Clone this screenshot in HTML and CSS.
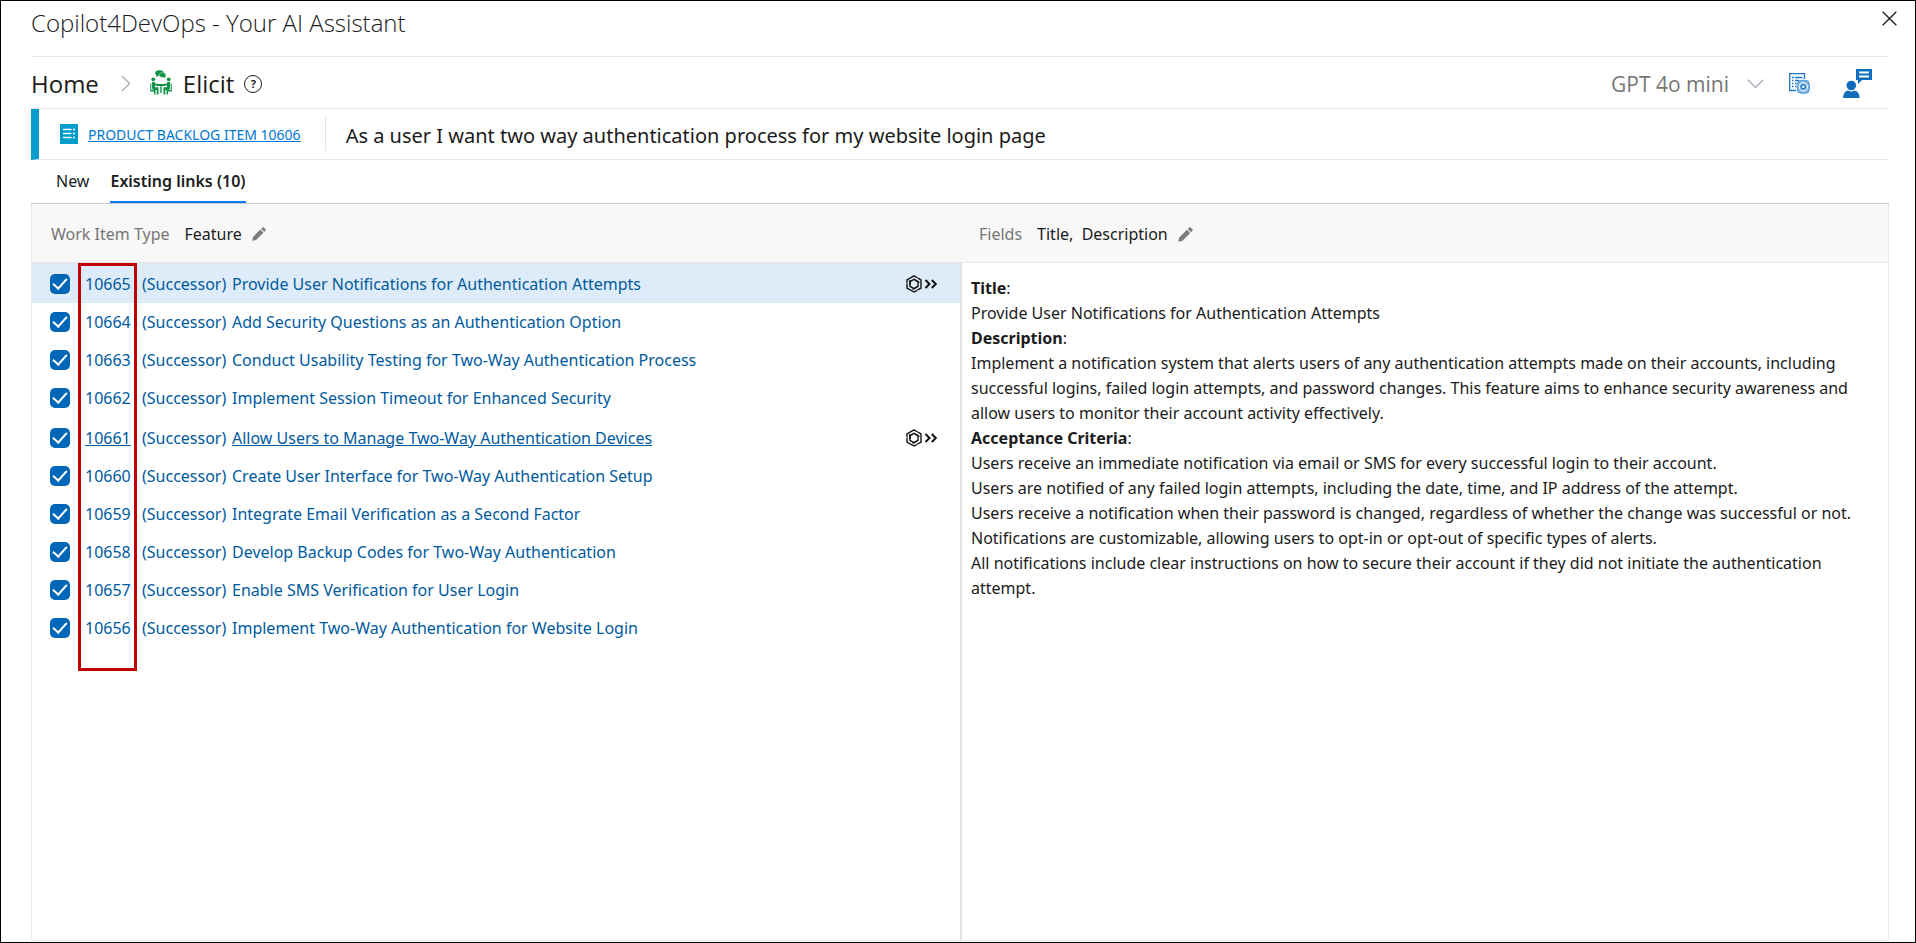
FILE: index.html
```html
<!DOCTYPE html>
<html lang="en">
<head>
<meta charset="utf-8">
<title>Copilot4DevOps - Your AI Assistant</title>
<link rel="stylesheet" href="styles.css">
</head>
<body>
<svg class="defs" aria-hidden="true">
  <symbol id="pencil" viewBox="0 0 14 14">
    <path d="M1 10 8.300 2.600 11.400 5.700 4 13 .300 13.700Z M9.100 1.800 10.700.3Q11.200 0 11.700.4L13.600 2.300Q14 2.800 13.600 3.300L12.200 4.900Z" fill="#7c7c7c"/>
  </symbol>
  <symbol id="swirl" viewBox="0 0 32 18">
    <g fill="none" stroke="#111" stroke-width="1.400">
      <path id="blade" d="M2 8.500V5L9 .900 12.500 3 M5 10V6.700L9 4.300 14.500 7.500"/>
      <use href="#blade" transform="rotate(120 9 9)"/>
      <use href="#blade" transform="rotate(240 9 9)"/>
      <path d="M20.500 5 24.500 9 20.500 13 M26.800 5 30.800 9 26.800 13" stroke-width="2"/>
    </g>
  </symbol>
</svg>
<div class="dialog">
  <header class="titlebar">
    <h1 class="titlebar-text">Copilot4DevOps - Your AI Assistant</h1>
    <button class="icon-btn close" aria-label="Close">
      <svg width="15" height="15" viewBox="0 0 15 15"><path d="M.700.700 14.300 14.300M14.300.700.700 14.300" stroke="#222" stroke-width="1.400"/></svg>
    </button>
  </header>

  <nav class="crumbs">
    <a class="crumb" href="#home">Home</a>
    <svg class="crumb-sep" width="10" height="17" viewBox="0 0 10 17"><path d="M1 1 8.500 8.500 1 16" fill="none" stroke="#a9abb5" stroke-width="1.400"/></svg>
    <svg class="crumb-icon" width="22" height="25" viewBox="0 0 22 25" fill="#0f9347">
      <ellipse cx="9.500" cy="3" rx="4.300" ry="2.800"/>
      <path d="M6.500 4.500 5.800 7 9 5.600Z"/>
      <ellipse cx="12.500" cy="5" rx="3.300" ry="2.400" stroke="#fff" stroke-width=".4"/>
      <path d="M13.500 6.500 15.500 8.500 15.300 5.500Z"/>
      <circle cx="3.300" cy="9.300" r="1.900"/><circle cx="18.700" cy="9.300" r="1.900"/>
      <path d="M2 12H4.500L5.500 13.800H8V15.500H5V17.200H8.500V24.500H6.700V20H4Q2 20 2 18Z"/>
      <path d="M20 12H17.500L16.500 13.800H14V15.500H17V17.200H13.500V24.500H15.300V20H18Q20 20 20 18Z"/>
      <path d="M7 14H15V16H7Z M10.300 15.500H11.700V23H10.300Z M.300 13.500H1.300V20H5.500V24.500H4V21.500H.300Z M21.700 13.500H20.700V20H16.500V24.500H18V21.500H21.700Z"/>
    </svg>
    <span class="crumb current">Elicit</span>
    <button class="icon-btn help" aria-label="Help">?</button>
    <div class="crumb-tools">
      <label class="model">
        <select class="model-select" aria-label="Model"><option>GPT 4o mini</option></select>
        <svg width="17" height="10" viewBox="0 0 17 10"><path d="M.800.800 8.500 8.500 16.200.800" fill="none" stroke="#a9abb5" stroke-width="1.400"/></svg>
      </label>
      <button class="icon-btn" aria-label="Document settings">
        <svg width="21" height="21" viewBox="0 0 21 21" fill="none" stroke="#1f77c8">
          <path d="M15.500 6V.700H.700V17.500H7" stroke-width="1.300"/>
          <path d="M3 4.500H5M6 4.500H13.500M3 7.500H4.500M6 7.500H10M3 10.500H4.500M6 10.500H7.500M3 13.500H4.500M6 13.500H7.500" stroke-width="1.300"/>
          <rect x="8.300" y="7.300" width="12" height="13" rx="4" fill="#7fb5e4" stroke="#4a93d6" stroke-width="1"/>
          <circle cx="14.300" cy="13.800" r="4.200" stroke="#fff" stroke-width="1"/>
          <circle cx="14.300" cy="13.800" r="2" stroke="#1f77c8" fill="#fff" stroke-width="1.300"/>
        </svg>
      </button>
      <button class="icon-btn feedback" aria-label="Feedback">
        <svg width="29" height="29" viewBox="0 0 29 29" fill="#0f6cbd">
          <path d="M13 0H29V11H19L15 15V11H13Z"/>
          <path d="M16 3.500H26M16 7.500H26" stroke="#fff" stroke-width="1.800"/>
          <circle cx="8.300" cy="16.500" r="4.800"/>
          <path d="M0 29Q.500 22 5 21.500Q8.300 23.600 11.600 21.500Q16.200 22 16.700 29Z"/>
        </svg>
      </button>
    </div>
  </nav>

  <section class="item">
    <svg class="item-icon" width="18" height="20" viewBox="0 0 18 20"><rect width="18" height="20" fill="#009ccc"/><path d="M3 5.500H11.500M3 9.500H11.500M3 13.500H11.500M13 5.500H15M13 9.500H15M13 13.500H15" stroke="#fff" stroke-width="1.500"/></svg>
    <a class="item-link" href="#10606">PRODUCT BACKLOG ITEM 10606</a>
    <h2 class="item-title">As a user I want two way authentication process for my website login page</h2>
  </section>

  <div class="tabs" role="tablist">
    <button class="tab" role="tab">New</button>
    <button class="tab active" role="tab" aria-selected="true">Existing links (10)</button>
  </div>

  <main class="panes">
    <section class="pane">
      <div class="toolbar">
        <span class="toolbar-label">Work Item Type</span>
        <span>Feature</span>
        <button class="icon-btn" aria-label="Edit work item type"><svg width="14" height="14"><use href="#pencil"/></svg></button>
      </div>
      <ul class="links">
        <li class="link-row tall selected"><input class="tick" type="checkbox" checked aria-label="Select 10665"><a class="id" href="#10665">10665</a><span>(Successor)</span><a class="name" href="#10665">Provide User Notifications for Authentication Attempts</a><button class="icon-btn" aria-label="Open with assistant"><svg width="32" height="18"><use href="#swirl"/></svg></button></li>
        <li class="link-row"><input class="tick" type="checkbox" checked aria-label="Select 10664"><a class="id" href="#10664">10664</a><span>(Successor)</span><a class="name" href="#10664">Add Security Questions as an Authentication Option</a></li>
        <li class="link-row"><input class="tick" type="checkbox" checked aria-label="Select 10663"><a class="id" href="#10663">10663</a><span>(Successor)</span><a class="name" href="#10663">Conduct Usability Testing for Two-Way Authentication Process</a></li>
        <li class="link-row"><input class="tick" type="checkbox" checked aria-label="Select 10662"><a class="id" href="#10662">10662</a><span>(Successor)</span><a class="name" href="#10662">Implement Session Timeout for Enhanced Security</a></li>
        <li class="link-row tall hovered"><input class="tick" type="checkbox" checked aria-label="Select 10661"><a class="id" href="#10661">10661</a><span>(Successor)</span><a class="name" href="#10661">Allow Users to Manage Two-Way Authentication Devices</a><button class="icon-btn" aria-label="Open with assistant"><svg width="32" height="18"><use href="#swirl"/></svg></button></li>
        <li class="link-row"><input class="tick" type="checkbox" checked aria-label="Select 10660"><a class="id" href="#10660">10660</a><span>(Successor)</span><a class="name" href="#10660">Create User Interface for Two-Way Authentication Setup</a></li>
        <li class="link-row"><input class="tick" type="checkbox" checked aria-label="Select 10659"><a class="id" href="#10659">10659</a><span>(Successor)</span><a class="name" href="#10659">Integrate Email Verification as a Second Factor</a></li>
        <li class="link-row"><input class="tick" type="checkbox" checked aria-label="Select 10658"><a class="id" href="#10658">10658</a><span>(Successor)</span><a class="name" href="#10658">Develop Backup Codes for Two-Way Authentication</a></li>
        <li class="link-row"><input class="tick" type="checkbox" checked aria-label="Select 10657"><a class="id" href="#10657">10657</a><span>(Successor)</span><a class="name" href="#10657">Enable SMS Verification for User Login</a></li>
        <li class="link-row"><input class="tick" type="checkbox" checked aria-label="Select 10656"><a class="id" href="#10656">10656</a><span>(Successor)</span><a class="name" href="#10656">Implement Two-Way Authentication for Website Login</a></li>
        <li class="id-highlight" aria-hidden="true"></li>
      </ul>
    </section>
    <section class="pane detail-pane">
      <div class="toolbar">
        <span class="toolbar-label">Fields</span>
        <span>Title,&nbsp; Description</span>
        <button class="icon-btn" aria-label="Edit fields"><svg width="15" height="15"><use href="#pencil"/></svg></button>
      </div>
      <div class="detail">
        <p><b>Title</b>:</p>
        <p>Provide User Notifications for Authentication Attempts</p>
        <p><b>Description</b>:</p>
        <p>Implement a notification system that alerts users of any authentication attempts made on their accounts, including successful logins, failed login attempts, and password changes. This feature aims to enhance security awareness and allow users to monitor their account activity effectively.</p>
        <p><b>Acceptance Criteria</b>:</p>
        <p>Users receive an immediate notification via email or SMS for every successful login to their account.</p>
        <p>Users are notified of any failed login attempts, including the date, time, and IP address of the attempt.</p>
        <p>Users receive a notification when their password is changed, regardless of whether the change was successful or not.</p>
        <p>Notifications are customizable, allowing users to opt-in or opt-out of specific types of alerts.</p>
        <p>All notifications include clear instructions on how to secure their account if they did not initiate the authentication attempt.</p>
      </div>
    </section>
  </main>
</div>
</body>
</html>
```
FILE: styles.css
```css
* { box-sizing: border-box; }
body {
  margin: 0;
  color: #1b1b1b;
  background: #fff;
  font-family: "Noto Sans", "Open Sans", sans-serif;
  font-size: 16px;
  line-height: 25px;
}
h1, h2, p, ul { margin: 0; padding: 0; font-weight: 400; }
button, select, input { font: inherit; color: inherit; margin: 0; }
a { color: inherit; text-decoration: none; }
svg { display: block; flex: none; }
.defs { position: absolute; width: 0; height: 0; }
.icon-btn { display: flex; flex: none; padding: 0; border: 0; background: none; }

.dialog {
  display: flex;
  flex-direction: column;
  min-height: 100vh;
  padding: 0 26px 1px 30px;
  border: 1px solid #000;
}

.titlebar {
  display: flex;
  justify-content: space-between;
  height: 56px;
  padding-top: 6px;
  border-bottom: 1px solid #e8e8e8;
}
.titlebar-text { font-family: "Open Sans", sans-serif; font-size: 24px; font-weight: 300; line-height: 31px; }
.close { align-self: flex-start; margin: 4px -8px 0 0; }

.crumbs {
  display: flex;
  align-items: center;
  height: 52px;
  padding-top: 2px;
  border-bottom: 1px solid #e8e8e8;
  font-family: "Open Sans", sans-serif;
  font-size: 24px;
  line-height: 32px;
}
.crumb-sep { margin: 0 19px 0 22px; }
.crumb-icon { margin: 0 11px 3px 0; }
.help {
  align-items: center;
  justify-content: center;
  width: 18px;
  height: 18px;
  margin-left: 10px;
  border: 1px solid #1b1b1b;
  border-radius: 50%;
  font-size: 11px;
  font-weight: 700;
  line-height: 16px;
}
.crumb-tools { display: flex; align-items: center; gap: 25px; margin-left: auto; padding-right: 17px; }
.model { display: flex; align-items: center; gap: 18px; color: #767676; }
.model-select { appearance: none; padding: 0; border: 0; background: none; font-size: 21px; }
.feedback { margin-left: 8px; }

.item {
  display: flex;
  align-items: center;
  height: 51px;
  padding-left: 21px;
  border-left: 8px solid #009ccc;
  border-bottom: 1px solid #e8e8e8;
}
.item-link { margin: 0 24px 0 10px; color: #0078d4; font-size: 14px; text-decoration: underline; }
.item-title { padding: 4px 0 0 20px; border-left: 1px solid #e3e3e3; font-size: 20px; line-height: 30px; }

.tabs { display: flex; height: 44px; padding-left: 25px; gap: 21px; border-bottom: 1px solid #c8c8c8; }
.tab { padding: 1px 0 0; border: 0; border-bottom: 2px solid transparent; background: none; }
.tab.active { border-color: #0a7cff; font-weight: 600; }

.panes {
  display: grid;
  grid-template-columns: 1fr 1fr;
  flex: 1;
  border: 1px solid #e8e8e8;
  border-top: 0;
}
.toolbar {
  display: flex;
  align-items: center;
  height: 59px;
  padding: 2px 0 0 19px;
  border-bottom: 1px solid #e8e8e8;
  background: #f8f8f8;
}
.toolbar-label { margin-right: 15px; color: #767676; }
.toolbar .icon-btn { margin-left: 10px; }
.detail-pane { display: flex; flex-direction: column; }
.detail { flex: 1; padding: 13px 16px 0 9px; border-left: 2px solid #e3e3e3; }

.links { position: relative; list-style: none; }
.link-row {
  display: grid;
  grid-template-columns: 35px 57px 90px 1fr auto;
  align-items: center;
  min-height: 38px;
  padding: 0 23px 0 18px;
  color: #005a9e;
}
.tall { min-height: 40px; padding-top: 2px; }
.selected { background: #deecf9; }
.hovered a { text-decoration: underline; }
.id, .name { justify-self: start; }
.tick {
  appearance: none;
  width: 20px;
  height: 20px;
  border-radius: 5px;
  background: #0067b8;
}
.tick:checked { display: grid; place-items: center; }
.tick:checked::before {
  content: "";
  width: 6px;
  height: 12px;
  margin-top: -4px;
  border: solid #fff;
  border-width: 0 2px 2px 0;
  rotate: 42deg;
}
.id-highlight {
  position: absolute;
  top: 0;
  left: 46px;
  width: 59px;
  height: calc(100% + 24px);
  border: 3px solid #c00000;
  pointer-events: none;
}
```
